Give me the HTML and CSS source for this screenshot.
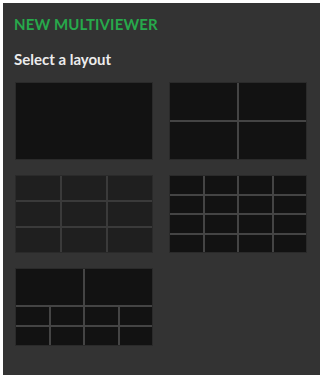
FILE: index.html
```html
<!DOCTYPE html>
<html lang="en">
<head>
    <meta charset="UTF-8">
    <meta name="viewport" content="width=device-width, initial-scale=1.0">
    <title>New Multiviewer</title>
    <link rel="stylesheet" href="styles.css">
</head>
<body>
    <div class="panel">
        <h2 class="panel-title">NEW MULTIVIEWER</h2>
        <h3 class="subtitle">Select a layout</h3>

        <div class="layout-list">
            <!-- 1 window -->
            <div class="layout layout-1">
                <div class="cell"></div>
            </div>

            <!-- 2x2 -->
            <div class="layout layout-4">
                <div class="cell"></div><div class="cell"></div>
                <div class="cell"></div><div class="cell"></div>
            </div>

            <!-- 3x3 -->
            <div class="layout layout-9">
                <div class="cell"></div><div class="cell"></div><div class="cell"></div>
                <div class="cell"></div><div class="cell"></div><div class="cell"></div>
                <div class="cell"></div><div class="cell"></div><div class="cell"></div>
            </div>

            <!-- 4x4 -->
            <div class="layout layout-16">
                <div class="cell"></div><div class="cell"></div><div class="cell"></div><div class="cell"></div>
                <div class="cell"></div><div class="cell"></div><div class="cell"></div><div class="cell"></div>
                <div class="cell"></div><div class="cell"></div><div class="cell"></div><div class="cell"></div>
                <div class="cell"></div><div class="cell"></div><div class="cell"></div><div class="cell"></div>
            </div>

            <!-- 2 big + 8 small -->
            <div class="layout layout-10">
                <div class="cell big"></div><div class="cell big"></div>
                <div class="cell"></div><div class="cell"></div><div class="cell"></div><div class="cell"></div>
                <div class="cell"></div><div class="cell"></div><div class="cell"></div><div class="cell"></div>
            </div>
        </div>
    </div>
</body>
</html>
```

FILE: styles.css
```css
/* General reset */
* {
    margin: 0;
    padding: 0;
    box-sizing: border-box;
}

body {
    font-family: Lato, "Open Sans", sans-serif;
    background-color: #fff;
}

/* Dark panel */
.panel {
    margin: 3px;
    width: 317px;
    height: 372px;
    background-color: #333;
    padding: 12px 13px 0 12px;
}

.panel-title {
    font-size: 15px;
    font-weight: 700;
    color: #27a94b;
    line-height: 18px;
    margin-left: -1px;
    letter-spacing: 0.1px;
}

.subtitle {
    font-size: 15px;
    font-weight: 700;
    color: #ececec;
    line-height: 18px;
    margin: 17px 0 0 -1px;
}

/* Layout thumbnails */
.layout-list {
    display: grid;
    grid-template-columns: 138px 138px;
    grid-auto-rows: 78px;
    column-gap: 16px;
    row-gap: 15px;
    margin-top: 14px;
}

.layout {
    display: grid;
    gap: 2px;
    background-color: #444;
    border: 1px solid #2a2a2a;
    cursor: pointer;
}

.layout .cell {
    background-color: #121212;
}

.layout-1 {
    grid-template-columns: 1fr;
}

.layout-4 {
    grid-template-columns: repeat(2, 1fr);
    grid-template-rows: repeat(2, 1fr);
}

.layout-9 {
    grid-template-columns: repeat(3, 1fr);
    grid-template-rows: repeat(3, 1fr);
    background-color: #3a3a3a;
}

.layout-9 .cell {
    background-color: #1f1f1f;
}

.layout-16 {
    grid-template-columns: repeat(4, 1fr);
    grid-template-rows: repeat(4, 1fr);
}

.layout-10 {
    grid-template-columns: repeat(4, 1fr);
    grid-template-rows: 2fr 1fr 1fr;
}

.layout-10 .big {
    grid-column: span 2;
}
```
